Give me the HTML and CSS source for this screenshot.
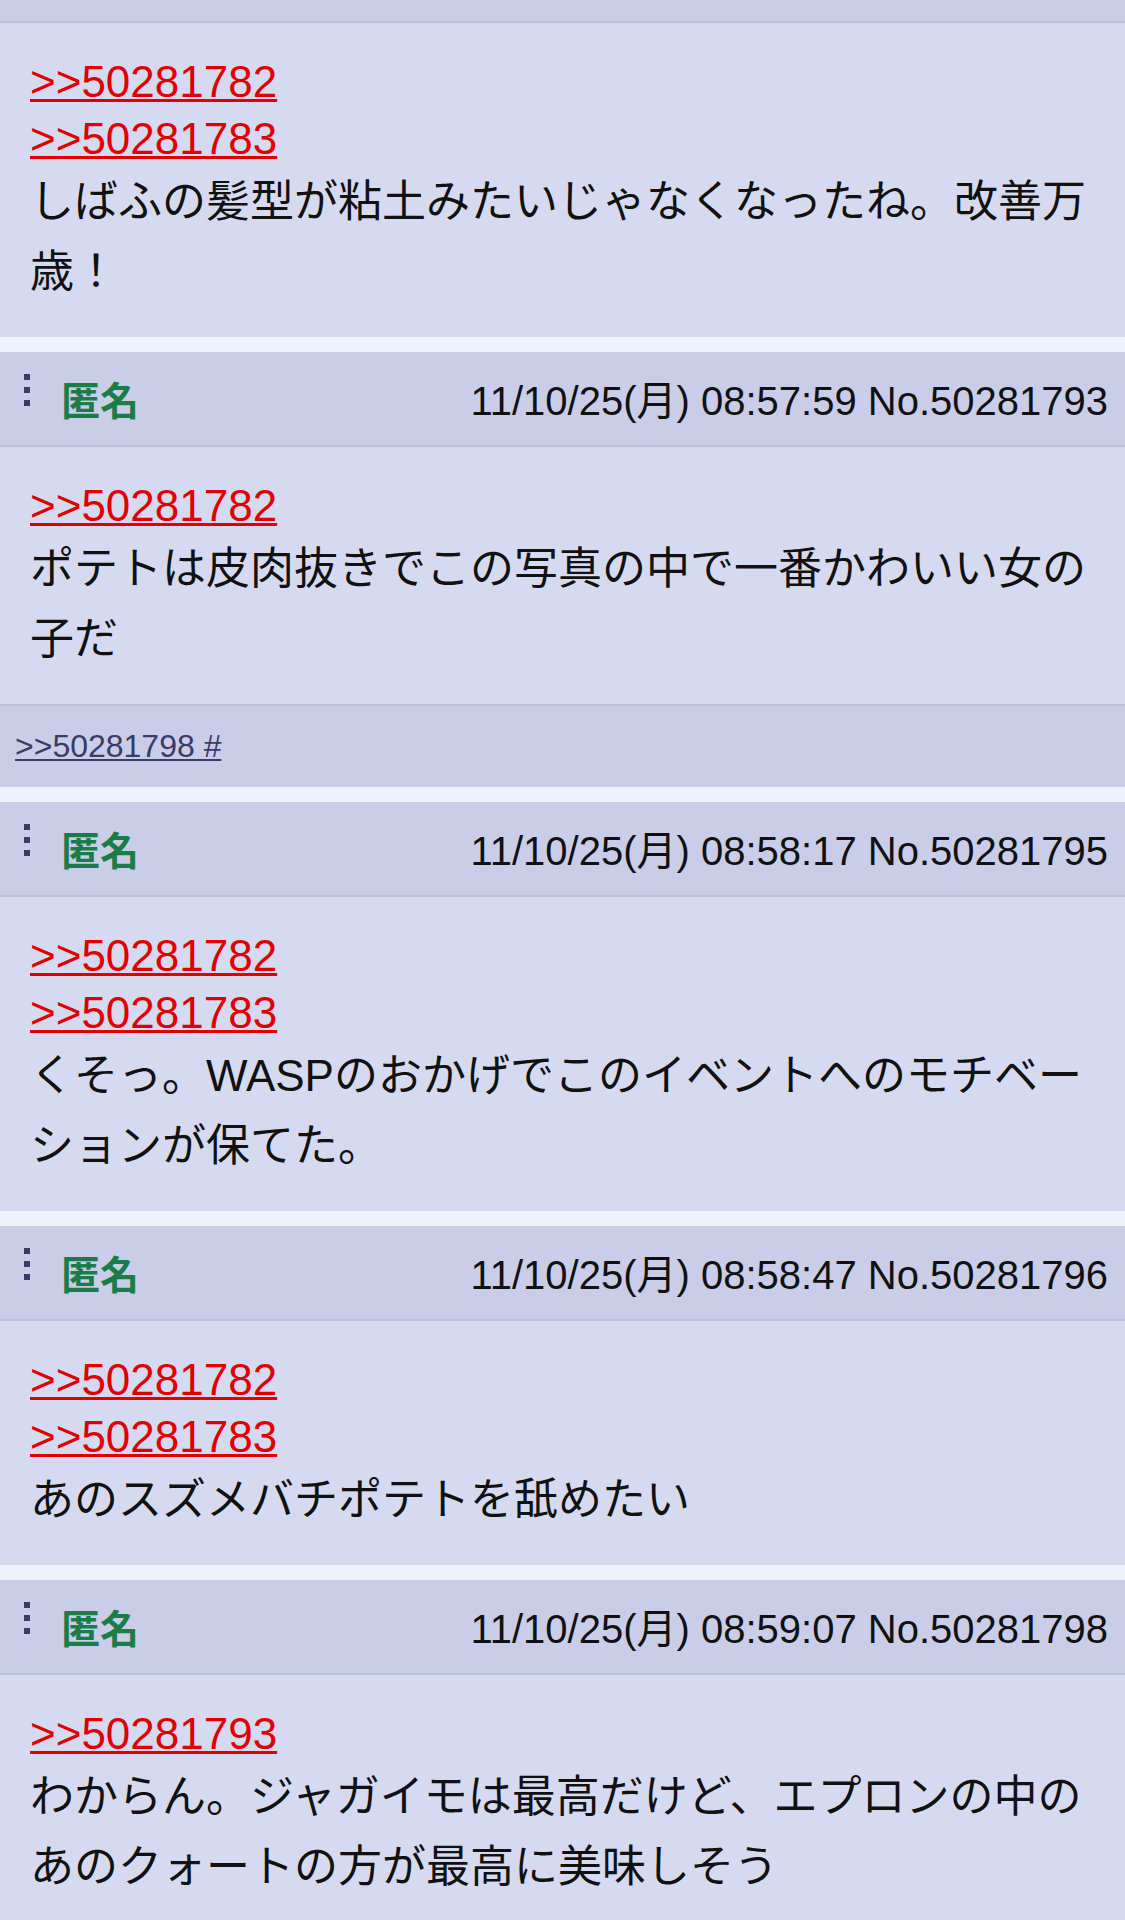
FILE: index.html
```html
<!DOCTYPE html>
<html lang="ja">
<head>
    <meta charset="UTF-8">
    <meta name="viewport" content="width=device-width, initial-scale=1.0">
    <title>スレッド</title>
    <link rel="stylesheet" href="styles.css">
</head>
<body>

<div class="thread">

    <div class="post">
        <div class="post-head cut"></div>
        <div class="post-body">
            <a class="res-link" href="#50281782">&gt;&gt;50281782</a>
            <a class="res-link" href="#50281783">&gt;&gt;50281783</a>
            <p class="post-text">しばふの髪型が粘土みたいじゃなくなったね。改善万歳！</p>
        </div>
    </div>

    <div class="post" id="50281793">
        <div class="post-head">
            <span class="menu-dots"><i></i><i></i><i></i></span>
            <span class="name">匿名</span>
            <span class="meta">11/10/25(月) 08:57:59 No.50281793</span>
        </div>
        <div class="post-body">
            <a class="res-link" href="#50281782">&gt;&gt;50281782</a>
            <p class="post-text">ポテトは皮肉抜きでこの写真の中で一番かわいい女の子だ</p>
        </div>
        <div class="backlinks">
            <a href="#50281798">&gt;&gt;50281798 #</a>
        </div>
    </div>

    <div class="post" id="50281795">
        <div class="post-head">
            <span class="menu-dots"><i></i><i></i><i></i></span>
            <span class="name">匿名</span>
            <span class="meta">11/10/25(月) 08:58:17 No.50281795</span>
        </div>
        <div class="post-body">
            <a class="res-link" href="#50281782">&gt;&gt;50281782</a>
            <a class="res-link" href="#50281783">&gt;&gt;50281783</a>
            <p class="post-text">くそっ。WASPのおかげでこのイベントへのモチベーションが保てた。</p>
        </div>
    </div>

    <div class="post" id="50281796">
        <div class="post-head">
            <span class="menu-dots"><i></i><i></i><i></i></span>
            <span class="name">匿名</span>
            <span class="meta">11/10/25(月) 08:58:47 No.50281796</span>
        </div>
        <div class="post-body">
            <a class="res-link" href="#50281782">&gt;&gt;50281782</a>
            <a class="res-link" href="#50281783">&gt;&gt;50281783</a>
            <p class="post-text">あのスズメバチポテトを舐めたい</p>
        </div>
    </div>

    <div class="post" id="50281798">
        <div class="post-head">
            <span class="menu-dots"><i></i><i></i><i></i></span>
            <span class="name">匿名</span>
            <span class="meta">11/10/25(月) 08:59:07 No.50281798</span>
        </div>
        <div class="post-body">
            <a class="res-link" href="#50281793">&gt;&gt;50281793</a>
            <p class="post-text">わからん。ジャガイモは最高だけど、エプロンの中のあのクォートの方が最高に美味しそう</p>
        </div>
    </div>

</div>

</body>
</html>
```

FILE: styles.css
```css
body {
    font-family: "Liberation Sans", "Noto Sans CJK JP", sans-serif;
    margin: 0;
    padding: 0;
    background-color: #eef2fc;
    color: #111;
}

.thread {
    display: flex;
    flex-direction: column;
    gap: 15px;
}

.post {
    background-color: #d6daf0;
}

.post-head {
    box-sizing: border-box;
    height: 95px;
    display: flex;
    align-items: center;
    padding: 0 17px 2px 24px;
    background-color: #c9cde8;
    border-bottom: 2px solid #b7c3d7;
}

.post-head.cut {
    height: 23px;
}

.menu-dots {
    display: flex;
    flex-direction: column;
    gap: 7px;
    align-self: flex-start;
    margin-top: 22px;
}

.menu-dots i {
    display: block;
    width: 6px;
    height: 6px;
    background-color: #3b3b66;
}

.name {
    margin-left: 31px;
    font-family: "Noto Sans CJK JP", sans-serif;
    font-size: 39px;
    font-weight: bold;
    color: #1a7c48;
}

.meta {
    margin-left: auto;
    font-size: 40px;
    color: #111;
}

.post-body {
    padding: 30px 25px 30px 30px;
    font-size: 44px;
}

.res-link {
    display: block;
    width: fit-content;
    line-height: 57px;
    color: #e00000;
    text-decoration: underline;
    text-decoration-thickness: 3px;
    text-underline-offset: 2px;
}

.post-text {
    margin: 0;
    line-height: 70px;
}

.backlinks {
    height: 81px;
    display: flex;
    align-items: center;
    padding-left: 15px;
    background-color: #c9cde8;
    border-top: 2px solid #b7c3d7;
}

.backlinks a {
    font-size: 32px;
    color: #3b3b66;
    text-decoration: underline;
    text-decoration-thickness: 2px;
    text-underline-offset: 2px;
}
```
